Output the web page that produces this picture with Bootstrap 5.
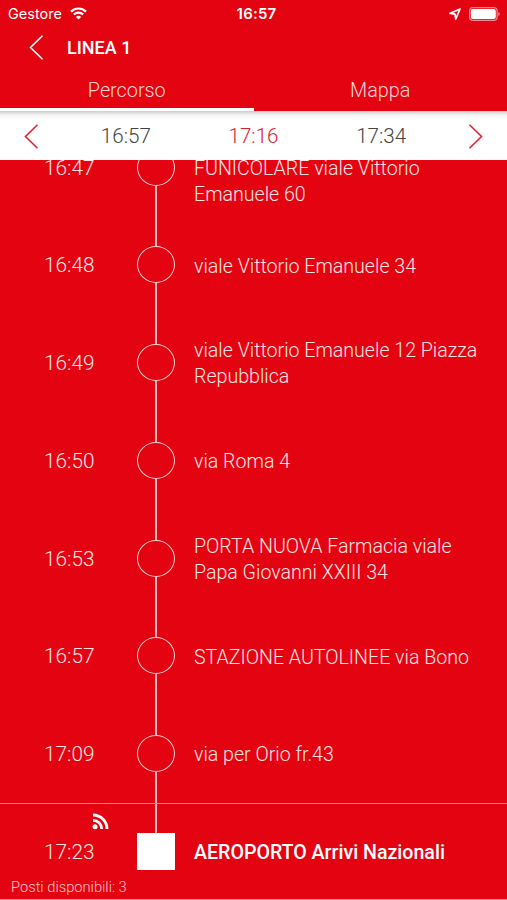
<!DOCTYPE html>
<html lang="it">
<head>
<meta charset="utf-8">
<meta name="viewport" content="width=device-width, initial-scale=1">
<title>Linea 1</title>
<link href="https://cdn.jsdelivr.net/npm/bootstrap@5.3.0/dist/css/bootstrap.min.css" rel="stylesheet">
<style>
body{background:#e40311;color:#fff;font-family:Roboto,sans-serif;height:900px}
svg{display:block;flex:none}
.status{height:27px;font-family:Inter,sans-serif;font-size:14.5px;padding:0 7px 0 8px}
.status-time{font-weight:600;font-size:15px;letter-spacing:.2px;padding:1px 0 0 5px}
.titlebar{height:41px;padding-left:29px;gap:23px}
.titlebar h1{font-size:18px;font-weight:500}
.tabs{height:43px;font-size:19.8px;font-weight:300;color:#ffd5d6}
.tabs a{color:inherit;padding-top:5px;border-bottom:3px solid transparent}
.tabs a:first-child{border-color:#fff}
.hours{height:49px;background:linear-gradient(#ccc,#f4f4f4 4px,#fff 9px);color:#444;font-size:20.6px;font-weight:300;padding:1px 22px 0}
.hours-list{padding:0 22px}
.hours .current{color:#dc2332}
.stops{height:740px}
.stops-list{margin-top:-41.7px}
.stop{height:97.75px;font-weight:300;color:#ffe3e4;flex:none}
.stop-time{width:137px;padding:2px 0 0 44px;font-size:20.8px}
.rail{width:38px}
.rail i{flex:1;width:1.5px;background:#ffb9bd}
.rail b{width:38px;height:37px;border:1.5px solid #ffd0d2;border-radius:50%}
.stop-name{padding:3px 0 0 19px;width:320px;font-size:19.6px;line-height:25.7px}
.stop:first-child .stop-name{padding-top:29px}
.last{border-top:1.5px solid #f58086;border-bottom:1.5px solid #f58086}
.last .rail b{background:#fff;border:0;border-radius:0}
.last .rail i:last-child{visibility:hidden}
.last .stop-name{font-weight:500;color:#fff}
.feed{left:92px;top:9px}
.seats{left:11px;bottom:1px;font-size:14.7px;color:#ffc4c6}
</style>
<script src="https://cdn.jsdelivr.net/npm/bootstrap@5.3.0/dist/js/bootstrap.bundle.min.js"></script>
</head>
<body class="overflow-hidden">
<header>
<div class="status d-flex align-items-center">
<div class="col d-flex align-items-center gap-2"><span>Gestore</span>
<svg width="17" height="13" viewBox="0 0 17 13" fill="none" stroke="#fff" stroke-width="2.2"><path d="M1 4.6a10.6 10.6 0 0 1 15 0M3.8 7.5a6.7 6.7 0 0 1 9.4 0"/><path d="M8.5 12.6 5.9 10a3.8 3.8 0 0 1 5.2 0z" fill="#fff" stroke="none"/></svg></div>
<div class="status-time">16:57</div>
<div class="col d-flex align-items-center justify-content-end gap-2">
<svg width="12" height="12" viewBox="0 0 12 12" fill="none" stroke="#fff" stroke-width="1.7" stroke-linejoin="round"><path d="M11 1 1 5.4l5 .7.7 5z"/></svg>
<svg width="31" height="14" viewBox="0 0 31 14"><rect x=".6" y=".6" width="27.5" height="12.8" rx="3.5" fill="none" stroke="#f58b90" stroke-width="1.2"/><rect x="1.8" y="2" width="25" height="10" rx="2" fill="#fff"/><path d="M29.3 5v4q1.5-.6 1.5-2t-1.5-2" fill="#f58b90"/></svg></div>
</div>
<div class="titlebar d-flex align-items-center">
<svg width="15" height="25" viewBox="0 0 15 25" fill="none" stroke="#fff" stroke-width="1.6"><path d="M13.5.8 1.5 12.5l12 11.7"/></svg>
<h1 class="m-0">LINEA 1</h1>
</div>
<nav class="tabs d-flex text-center">
<a class="col d-flex align-items-center justify-content-center text-decoration-none" href="#">Percorso</a>
<a class="col d-flex align-items-center justify-content-center text-decoration-none" href="#">Mappa</a>
</nav>
</header>
<div class="hours d-flex align-items-center">
<svg width="18" height="25" viewBox="0 0 18 25" fill="none" stroke="#dc2332" stroke-width="1.6"><path d="M15.5.8 3.5 12.5l12 11.7"/></svg>
<div class="hours-list d-flex flex-fill text-center"><span class="col">16:57</span><span class="col current">17:16</span><span class="col">17:34</span></div>
<svg width="18" height="25" viewBox="0 0 18 25" fill="none" stroke="#dc2332" stroke-width="1.6"><path d="m2.5.8 12 11.7-12 11.7"/></svg>
</div>
<main class="stops overflow-hidden">
<div class="stops-list d-flex flex-column">
<div class="stop d-flex align-items-center"><div class="stop-time">16:47</div><div class="rail h-100 d-flex flex-column align-items-center"><i></i><b></b><i></i></div><div class="stop-name">FUNICOLARE viale Vittorio<br>Emanuele 60</div></div>
<div class="stop d-flex align-items-center"><div class="stop-time">16:48</div><div class="rail h-100 d-flex flex-column align-items-center"><i></i><b></b><i></i></div><div class="stop-name">viale Vittorio Emanuele 34</div></div>
<div class="stop d-flex align-items-center"><div class="stop-time">16:49</div><div class="rail h-100 d-flex flex-column align-items-center"><i></i><b></b><i></i></div><div class="stop-name">viale Vittorio Emanuele 12 Piazza<br>Repubblica</div></div>
<div class="stop d-flex align-items-center"><div class="stop-time">16:50</div><div class="rail h-100 d-flex flex-column align-items-center"><i></i><b></b><i></i></div><div class="stop-name">via Roma 4</div></div>
<div class="stop d-flex align-items-center"><div class="stop-time">16:53</div><div class="rail h-100 d-flex flex-column align-items-center"><i></i><b></b><i></i></div><div class="stop-name">PORTA NUOVA Farmacia viale<br>Papa Giovanni XXIII 34</div></div>
<div class="stop d-flex align-items-center"><div class="stop-time">16:57</div><div class="rail h-100 d-flex flex-column align-items-center"><i></i><b></b><i></i></div><div class="stop-name">STAZIONE AUTOLINEE via Bono</div></div>
<div class="stop d-flex align-items-center"><div class="stop-time">17:09</div><div class="rail h-100 d-flex flex-column align-items-center"><i></i><b></b><i></i></div><div class="stop-name">via per Orio fr.43</div></div>
<div class="stop last d-flex align-items-center position-relative"><div class="stop-time">17:23</div><div class="rail h-100 d-flex flex-column align-items-center"><i></i><b></b><i></i></div><div class="stop-name">AEROPORTO Arrivi Nazionali</div>
<svg class="feed position-absolute" width="17" height="17" viewBox="0 0 17 17" fill="none" stroke="#fff" stroke-width="2.8"><path d="M1 2A14 14 0 0 1 15 16M1 7.3A8.7 8.7 0 0 1 9.7 16"/><circle cx="3" cy="13.8" r="2.5" fill="#fff" stroke="none"/></svg>
<div class="seats position-absolute">Posti disponibili: 3</div></div>
</div>
</main>
</body>
</html>
